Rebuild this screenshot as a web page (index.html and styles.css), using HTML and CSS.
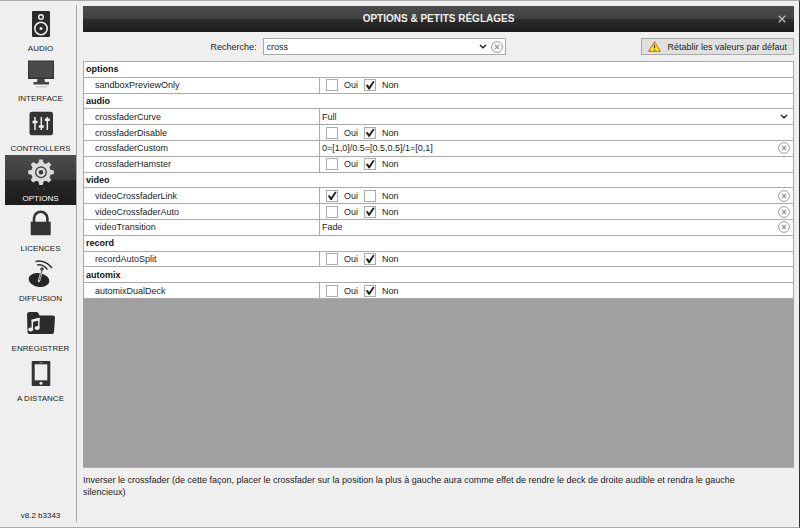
FILE: index.html
```html
<!DOCTYPE html>
<html lang="fr">
<head>
    <meta charset="UTF-8">
    <meta name="viewport" content="width=device-width, initial-scale=1.0">
    <title>Options &amp; petits réglages</title>
    <link rel="stylesheet" href="styles.css">
</head>
<body>

    <div class="window">

        <!-- Menu de gauche -->
        <nav class="sidebar">
            <a class="item" href="#">
                <svg class="icon" viewBox="0 0 32 34">
                    <rect x="7" y="4" width="18" height="26" rx="1" fill="#2b2b2b"/>
                    <circle cx="16" cy="10" r="2.3" fill="none" stroke="#eee" stroke-width="1.5"/>
                    <circle cx="16" cy="21.5" r="6.2" fill="none" stroke="#eee" stroke-width="1.6"/>
                    <circle cx="16" cy="21.5" r="1.5" fill="#eee"/>
                </svg>
                AUDIO
            </a>
            <a class="item" href="#">
                <svg class="icon" viewBox="0 0 32 34">
                    <rect x="3" y="3.5" width="26" height="18.5" fill="#333"/>
                    <rect x="4" y="4.5" width="24" height="16" fill="#4a4a4a"/>
                    <path d="M12.5 22h7l.5 3h4v2.5H8.5V25h3.5z" fill="#444"/>
                    <path d="M10 29h13l-2 1.5h-9z" fill="#ccc"/>
                </svg>
                INTERFACE
            </a>
            <a class="item" href="#">
                <svg class="icon" viewBox="0 0 32 34">
                    <rect x="4.5" y="4.7" width="23.5" height="23.5" rx="2.5" fill="#333"/>
                    <path d="M10 10v13M16.3 10v13M22.3 10v13" stroke="#eee" stroke-width="1.5"/>
                    <path d="M7.5 15h5M13.8 19.5h5M19.8 12.7h5" stroke="#eee" stroke-width="2.4"/>
                </svg>
                CONTROLLERS
            </a>
            <a class="item active" href="#">
                <svg class="icon" viewBox="0 0 32 34">
                    <g fill="#dcdcdc">
                        <circle cx="16" cy="15.3" r="9.8"/>
                        <path id="tooth" d="M13.3 7l.9-4.5h3.6l.9 4.5v16.600l-.9 4.500h-3.600l-.9-4.500z"/>
                        <use href="#tooth" transform="rotate(45 16 15.3)"/>
                        <use href="#tooth" transform="rotate(90 16 15.3)"/>
                        <use href="#tooth" transform="rotate(135 16 15.3)"/>
                    </g>
                    <circle cx="16" cy="15.3" r="5.3" fill="none" stroke="#444" stroke-width="1.4"/>
                    <circle cx="16" cy="15.3" r="2.2" fill="#333"/>
                    <path d="M12 31h2v2h-2zM18 31h2v2h-2z" fill="#3a3a3a"/>
                </svg>
                OPTIONS
            </a>
            <a class="item" href="#">
                <svg class="icon" viewBox="0 0 32 34">
                    <rect x="5.7" y="14.7" width="20" height="13.5" fill="#333"/>
                    <path d="M9 15v-3.5a6.7 6.7 0 0 1 13.4 0V15" fill="none" stroke="#333" stroke-width="2.6"/>
                </svg>
                LICENCES
            </a>
            <a class="item" href="#">
                <svg class="icon" viewBox="0 0 32 34">
                    <ellipse cx="14" cy="23" rx="10.5" ry="6.8" fill="#262626" transform="rotate(10 14 23)"/>
                    <path d="M14 24l3-11" stroke="#ccc" stroke-width="2.4" stroke-linecap="round"/>
                    <path d="M14.500 23l2.500-10" stroke="#555" stroke-width=".8"/>
                    <circle cx="17" cy="12" r="1.8" fill="#444"/>
                    <path d="M12 8q6-1 10.5 4.5M10.5 4.5Q20 2.5 27 11" fill="none" stroke="#333" stroke-width="1.5"/>
                </svg>
                DIFFUSION
            </a>
            <a class="item" href="#">
                <svg class="icon" viewBox="0 0 32 34">
                    <path d="M2 7.500q0-2.500 2.500-2.500h7q2 0 3 3.500H28q2 0 2 2l-1 14.500q0 2-2 2H4.500q-2 0-2-2z" fill="#2b2b2b"/>
                    <path d="M7.300 22v-8.500l6.500-1.700v9" fill="none" stroke="#eee" stroke-width="1.500"/>
                    <path d="M6.600 14l7.900-2" stroke="#eee" stroke-width="2.600"/>
                    <ellipse cx="5.700" cy="22.500" rx="2.500" ry="2" fill="#eee"/>
                    <ellipse cx="12.200" cy="20.900" rx="2.500" ry="2" fill="#eee"/>
                </svg>
                ENREGISTRER
            </a>
            <a class="item" href="#">
                <svg class="icon" viewBox="0 0 32 34">
                    <rect x="6.7" y="4" width="18.6" height="25" rx="1" fill="#333"/>
                    <rect x="9.7" y="7.3" width="12.6" height="16" fill="#eee"/>
                    <path d="M14.5 5.7h3" stroke="#aaa" stroke-width=".8"/>
                    <circle cx="16" cy="26.3" r="1.5" fill="#eee"/>
                </svg>
                A DISTANCE
            </a>
            <div class="version">v8.2 b3343</div>
        </nav>

        <main class="content">

            <header class="titlebar">
                <h1>OPTIONS &amp; PETITS RÉGLAGES</h1>
                <button class="close" aria-label="Fermer">
                    <svg width="8" height="8" viewBox="0 0 8 8"><path d="M.7.7l6.600 6.600M7.300.7L.7 7.300" stroke="#bbb" stroke-width="1.3"/></svg>
                </button>
            </header>

            <!-- Recherche -->
            <div class="toolbar">
                <div class="search">
                    <label for="search">Recherche:</label>
                    <div class="search-box">
                        <input type="text" id="search" class="text" value="cross">
                        <button class="icon-button" aria-label="Historique"><svg width="8" height="5" viewBox="0 0 8 5"><path d="M1 1l3 2.8L7 1" fill="none" stroke="#222" stroke-width="1.5"/></svg></button>
                        <button class="icon-button" aria-label="Effacer"><svg class="round" viewBox="0 0 12 12"><circle cx="6" cy="6" r="5.4"/><path d="M4 4l4 4M8 4l-4 4"/></svg></button>
                    </div>
                </div>
                <button class="reset">
                    <svg width="13" height="11" viewBox="0 0 13 11">
                        <path d="M6.5.8L12.3 10.4H.7z" fill="#ff0" stroke="#e8702a" stroke-width="1.1" stroke-linejoin="round"/>
                        <path d="M6.5 3.5v3.7M6.5 8.2v1.3" stroke="#333" stroke-width="1.3"/>
                    </svg>
                    Rétablir les valeurs par défaut
                </button>
            </div>

            <!-- Liste des options -->
            <div class="list">
                <table class="options">
                    <colgroup>
                        <col class="col-name">
                        <col>
                    </colgroup>
                    <tbody>
                        <tr><th colspan="2">options</th></tr>
                        <tr>
                            <td>sandboxPreviewOnly</td>
                            <td><div class="value"><label><input type="checkbox">Oui</label><label><input type="checkbox" checked>Non</label></div></td>
                        </tr>
                        <tr><th colspan="2">audio</th></tr>
                        <tr>
                            <td><label for="curve">crossfaderCurve</label></td>
                            <td><div class="value">
                                <select id="curve" class="text"><option>Full</option></select>
                                <svg class="arrow" width="8" height="5" viewBox="0 0 8 5"><path d="M1 1l3 2.8L7 1" fill="none" stroke="#222" stroke-width="1.5"/></svg>
                            </div></td>
                        </tr>
                        <tr>
                            <td>crossfaderDisable</td>
                            <td><div class="value"><label><input type="checkbox">Oui</label><label><input type="checkbox" checked>Non</label></div></td>
                        </tr>
                        <tr>
                            <td><label for="custom">crossfaderCustom</label></td>
                            <td><div class="value">
                                <input type="text" id="custom" class="text" value="0=[1,0]/0.5=[0.5,0.5]/1=[0,1]">
                                <button class="icon-button" aria-label="Effacer"><svg class="round" viewBox="0 0 12 12"><circle cx="6" cy="6" r="5.4"/><path d="M4 4l4 4M8 4l-4 4"/></svg></button>
                            </div></td>
                        </tr>
                        <tr>
                            <td>crossfaderHamster</td>
                            <td><div class="value"><label><input type="checkbox">Oui</label><label><input type="checkbox" checked>Non</label></div></td>
                        </tr>
                        <tr><th colspan="2">video</th></tr>
                        <tr>
                            <td>videoCrossfaderLink</td>
                            <td><div class="value">
                                <label><input type="checkbox" checked>Oui</label><label><input type="checkbox">Non</label>
                                <button class="icon-button" aria-label="Effacer"><svg class="round" viewBox="0 0 12 12"><circle cx="6" cy="6" r="5.4"/><path d="M4 4l4 4M8 4l-4 4"/></svg></button>
                            </div></td>
                        </tr>
                        <tr>
                            <td>videoCrossfaderAuto</td>
                            <td><div class="value">
                                <label><input type="checkbox">Oui</label><label><input type="checkbox" checked>Non</label>
                                <button class="icon-button" aria-label="Effacer"><svg class="round" viewBox="0 0 12 12"><circle cx="6" cy="6" r="5.4"/><path d="M4 4l4 4M8 4l-4 4"/></svg></button>
                            </div></td>
                        </tr>
                        <tr>
                            <td><label for="transition">videoTransition</label></td>
                            <td><div class="value">
                                <input type="text" id="transition" class="text" value="Fade">
                                <button class="icon-button" aria-label="Effacer"><svg class="round" viewBox="0 0 12 12"><circle cx="6" cy="6" r="5.4"/><path d="M4 4l4 4M8 4l-4 4"/></svg></button>
                            </div></td>
                        </tr>
                        <tr><th colspan="2">record</th></tr>
                        <tr>
                            <td>recordAutoSplit</td>
                            <td><div class="value"><label><input type="checkbox">Oui</label><label><input type="checkbox" checked>Non</label></div></td>
                        </tr>
                        <tr><th colspan="2">automix</th></tr>
                        <tr>
                            <td>automixDualDeck</td>
                            <td><div class="value"><label><input type="checkbox">Oui</label><label><input type="checkbox" checked>Non</label></div></td>
                        </tr>
                    </tbody>
                </table>
            </div>

            <p class="description">Inverser le crossfader (de cette façon, placer le crossfader sur la position la plus à gauche aura comme effet de rendre le deck de droite audible et rendra le gauche silencieux)</p>

        </main>

    </div>

</body>
</html>
```
FILE: styles.css
```css
* {
    box-sizing: border-box;
}
body {
    margin: 0;
    background-color: #efefef;
    color: #222;
    font-family: "Liberation Sans", Arial, sans-serif;
    font-size: 9px;
    line-height: 12px;
}
button, input, select {
    font: inherit;
    color: inherit;
    margin: 0;
    padding: 0;
    border: 0;
    background: none;
}
.window {
    display: flex;
    min-height: 100vh;
    padding: 4px 5px 5px 5px;
    border-top: 1px solid #aaa;
    border-bottom: 1px solid #aaa;
    border-right: 1px solid #333;
}
.sidebar {
    display: flex;
    flex-direction: column;
    width: 72px;
    flex-shrink: 0;
    border-right: 1px solid #aaa;
}
.item {
    display: flex;
    flex-direction: column;
    align-items: center;
    gap: 2px;
    height: 50px;
    padding-top: 2px;
    color: #222;
    font-size: 8px;
    text-decoration: none;
    white-space: nowrap;
}
.item.active {
    color: #fff;
    background: linear-gradient(#4c4c4c, #3a3a3a 50%, #282828 50%, #1c1c1c);
}
.icon {
    width: 32px;
    height: 34px;
    flex-shrink: 0;
}
.version {
    margin-top: auto;
    text-align: center;
    font-size: 8px;
}
.content {
    display: flex;
    flex-direction: column;
    flex: 1;
    min-width: 0;
    padding: 1px 0 0 6px;
}
.titlebar {
    display: flex;
    align-items: center;
    height: 26px;
    padding: 0 8px 0 16px;
    color: #eee;
    background: linear-gradient(#4c4c4c, #404040 50%, #2c2c2c 50%, #1c1c1c);
}
.titlebar h1 {
    flex: 1;
    margin: 0;
    text-align: center;
    font-size: 10px;
}
.close {
    display: flex;
}
.toolbar {
    display: flex;
    justify-content: space-between;
    margin: 6px 0;
}
.search {
    display: flex;
    align-items: center;
    gap: 6px;
    width: 60%;
    padding-right: 4px;
    justify-content: flex-end;
}
.search-box {
    display: flex;
    align-items: center;
    width: 243px;
    height: 17px;
    border: 1px solid #aaa;
    background: #fff;
}
.text {
    flex: 1;
    min-width: 0;
    height: 14px;
    padding: 0 3px;
    appearance: none;
    outline: none;
}
.icon-button {
    display: flex;
    margin-left: auto;
    padding: 0 2px;
}
.round {
    width: 12px;
    height: 12px;
    fill: none;
    stroke: #999;
    stroke-width: 1;
}
.round path {
    stroke-width: 1.4;
}
.reset {
    display: flex;
    align-items: center;
    gap: 6px;
    height: 17px;
    padding: 0 6px;
    border: 1px solid #aaa;
    background: #e0e0e0;
    white-space: nowrap;
}
.list {
    flex: 1;
    background: #a0a0a0;
    border-bottom: 1px solid #b4b4b4;
}
.options {
    width: 100%;
    height: 238px;
    table-layout: fixed;
    border-collapse: collapse;
    background: #fff;
}
.col-name {
    width: 236px;
}
.options th, .options td {
    padding: 0;
    border: 1px solid #aaa;
    line-height: 14px;
}
.options th {
    padding-left: 2px;
    text-align: left;
    color: #111;
}
.options td:first-child {
    padding-left: 11px;
}
.value {
    display: flex;
    align-items: center;
    height: 14px;
    padding-right: 1px;
}
.value label {
    display: flex;
    align-items: center;
    gap: 6px;
    margin-left: 6px;
}
.value input[type="checkbox"] {
    width: 12px;
    height: 12px;
    appearance: none;
    border: 1px solid #aaa;
    background: #fff;
}
.value input[type="checkbox"]:checked::after {
    content: "";
    display: block;
    height: 10px;
    background: #222;
    clip-path: polygon(8% 50%, 26% 44%, 42% 64%, 80% 8%, 96% 16%, 48% 92%, 34% 92%);
}
.value .text {
    padding: 0 2px;
}
.arrow {
    margin: 0 4px;
}
.description {
    height: 54px;
    margin: 0;
    padding: 6px 24px 0 0;
}
```
